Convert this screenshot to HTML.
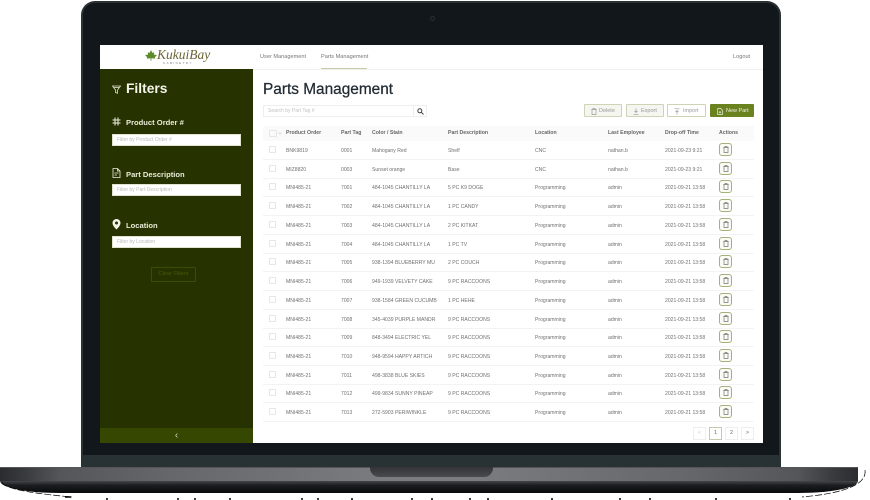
<!DOCTYPE html>
<html><head><meta charset="utf-8">
<style>
html,body{margin:0;padding:0;background:#fff}
body{width:870px;height:500px;position:relative;overflow:hidden;font-family:"Liberation Sans",sans-serif;color:#666}
.a,.a *{box-sizing:border-box}
.a{position:absolute}
#body{left:81px;top:1px;width:700px;height:467px;background:#11171a;border-radius:14px 14px 0 0;border:2px solid #2a3234;border-bottom:0;outline:0}
#chin{left:83px;top:455px;width:696px;height:12px;background:#283133}
#cam{left:430px;top:16px;width:5px;height:5px;border-radius:50%;border:1px solid #2a3033}
#b1{left:0;top:467px;width:858px;height:14px;background:linear-gradient(90deg,#2b2c30 0,#3a3b3f 3%,#55565a 7%,#66676b 20%,#7b7c80 45%,#7b7c80 55%,#66676b 80%,#55565a 93%,#3a3b3f 97%,#2b2c30 100%);border-top:1px solid #555}
#b2{left:0;top:481px;width:858px;height:12px;background:linear-gradient(#45464a,#1c1d20 35%,#08090a);border-radius:0 0 60px 60px/0 0 12px 12px}
#notch{left:370px;top:467px;width:123px;height:10px;background:linear-gradient(#333437,#4a4b4f);border-radius:0 0 9px 9px}
#screen{left:100px;top:45px;width:663px;height:398px;background:#fff;overflow:hidden;filter:blur(.3px)}
#nav{left:0;top:0;width:663px;height:25px;border-bottom:1px solid #f0f0f0}
.nt{position:absolute;font-size:5.6px;color:#777;top:9px;white-space:nowrap}
#ul{left:221px;top:23px;width:46px;height:1px;background:#c5cba8}
#side{left:0;top:24px;width:153px;height:374px;background:#263300}
#tog{left:0;top:359px;width:153px;height:15px;background:#354700;color:#cfd4bb;font-size:10px;text-align:center;line-height:15px}
.lab{position:absolute;left:26px;color:#e8ecd8;font-size:7.6px;font-weight:bold;white-space:nowrap}
.inp{position:absolute;left:12px;width:129px;height:12px;background:#fff;border:1px solid #dfe3cf;color:#bbb;font-size:5px;line-height:10px;padding-left:4px;white-space:nowrap}
#clr{left:51px;top:198px;width:45px;height:15px;border:1px solid #3b4c05;color:#445a08;font-size:5.6px;line-height:13px;text-align:center;border-radius:1px}
#title{left:163px;top:35px;font-size:15.400px;color:#222b33;white-space:nowrap;line-height:19px;-webkit-text-stroke:.25px #222b33}
#srch{left:163px;top:60px;width:151px;height:12px;border:1px solid #eee;color:#c2c2c2;font-size:5px;line-height:10px;padding-left:4px}
#sb{left:313px;top:60px;width:14px;height:12px;border:1px solid #eee}
.btn{position:absolute;top:59px;height:13px;border:1px solid #cdd4b6;background:#f5f6f0;border-radius:1px;color:#999;font-size:5.500px;white-space:nowrap}
.btn span{position:absolute;top:2.500px;line-height:7px}
.btn svg{position:absolute;top:2.500px}
#thead{left:163px;top:81px;width:491px;height:15px;background:#fafafa}
.r{position:absolute;left:163px;width:491px;height:19px;border-bottom:1px solid #f3f3f3}
.r span,#thead span{position:absolute;top:1px;line-height:18px;font-size:5.100px;white-space:nowrap;color:#707070}
#thead span{top:0;line-height:15px;color:#666;font-weight:bold;font-size:5.200px}
.c1{left:23px}.c2{left:78px}.c3{left:109px}.c4{left:185px}.c5{left:272px}.c6{left:345px}.c7{left:402px}.c8{left:456px}
.r i,#thead i{position:absolute;left:6px;top:5px;width:7px;height:7px;border:1px solid #e6e6e6;border-radius:1px;display:block}
#thead i{top:4px;width:8px}
.r b{position:absolute;left:456px;top:2px;width:13px;height:13px;border:1px solid #a3b27a;border-radius:3px;background:#fafbf6}
.r b svg{position:absolute;left:2.500px;top:2px}
.p{position:absolute;top:382px;width:13px;height:13px;border:1px solid #eee;font-size:5.400px;text-align:center;line-height:11px;color:#666}
#dash{left:0;top:465px;width:870px;height:35px}
</style></head><body>
<div class="a" id="body"></div>
<div class="a" id="chin"></div>
<div class="a" id="cam"></div>
<div class="a" id="b1"></div>
<div class="a" id="b2"></div>
<div class="a" id="notch"></div>

<div class="a" id="screen">
 <div class="a" id="nav">
  <svg style="position:absolute;left:45px;top:5px" width="12" height="11" viewBox="0 0 13 12"><path d="M6.500 0L8 3.200 10 2.400 9.700 5 13 5.400 10.600 8 11.200 9.400 7 9 6.800 12H6.200L6 9 1.800 9.400 2.400 8 0 5.400 3.300 5 3 2.400 5 3.200Z" fill="#5d8a2a"/></svg>
  <div style="position:absolute;left:57px;top:3px;font:italic 13.500px 'Liberation Serif',serif;color:#6a6436;white-space:nowrap;line-height:14px">KukuiBay</div>
  <div style="position:absolute;left:63px;top:15.500px;font-size:3px;letter-spacing:1.400px;color:#777;white-space:nowrap;line-height:4px">CABINETRY</div>
  <div class="nt" style="left:160px">User Management</div>
  <div class="nt" style="left:221px">Parts Management</div>
  <div class="nt" style="left:633px">Logout</div>
  <div class="a" id="ul"></div>
 </div>

 <div class="a" id="side">
  <svg style="position:absolute;left:12px;top:16px" width="9" height="9" viewBox="0 0 9 9" fill="none" stroke="#dfe4cf" stroke-width=".8"><path d="M.5 1h8L5.500 5v3.300L3.500 7.500V5Z"/><path d="M2 2.500h5"/></svg>
  <div style="position:absolute;left:26px;top:11px;font-size:13.800px;font-weight:bold;color:#f4f6ea;line-height:17px">Filters</div>

  <svg style="position:absolute;left:12px;top:48px" width="9" height="9" viewBox="0 0 9 9" fill="none" stroke="#eef0e2" stroke-width="1"><path d="M3 0.500V8.500M6 0.500V8.500M.5 3H8.500M.5 6H8.500"/></svg>
  <div class="lab" style="top:49px">Product Order #</div>
  <div class="inp" style="top:65px">Filter by Product Order #</div>

  <svg style="position:absolute;left:12px;top:99px" width="9" height="10" viewBox="0 0 9 10" fill="none" stroke="#eef0e2" stroke-width=".8"><path d="M1 .500H5.500L8 3V9.500H1ZM5.500 .500V3H8M2.500 5H6.500M2.500 7H5"/></svg>
  <div class="lab" style="top:101px">Part Description</div>
  <div class="inp" style="top:115px">Filter by Part Description</div>

  <svg style="position:absolute;left:12px;top:150px" width="9" height="11" viewBox="0 0 9 11"><path fill-rule="evenodd" d="M4.500 0A4 4 0 0 1 8.500 4C8.500 6.500 6 9 4.500 10.500 3 9 .5 6.500.5 4A4 4 0 0 1 4.500 0ZM4.500 2.500A1.500 1.500 0 1 0 4.500 5.500 1.500 1.500 0 1 0 4.500 2.500Z" fill="#f2f4e8"/></svg>
  <div class="lab" style="top:152px">Location</div>
  <div class="inp" style="top:167px">Filter by Location</div>

  <div class="a" id="clr">Clear Filters</div>
  <div class="a" id="tog">‹</div>
 </div>

 <div class="a" id="title">Parts Management</div>
 <div class="a" id="srch">Search by Part Tag #</div>
 <div class="a" id="sb"><svg style="position:absolute;left:3px;top:2px" width="7" height="7" viewBox="0 0 7 7" fill="none" stroke="#444" stroke-width="1"><circle cx="2.800" cy="2.800" r="2"/><path d="M4.300 4.300L6.500 6.500"/></svg></div>

 <div class="btn" style="left:484px;width:38px"><svg style="left:6px" width="6" height="7" viewBox="0 0 6 7" fill="none" stroke="#999" stroke-width=".7"><path d="M1 1.500H5V6.500H1ZM.3 1.500H5.700M2 1.500V.5H4V1.500"/></svg><span style="left:14px">Delete</span></div>
 <div class="btn" style="left:526px;width:38px"><svg style="left:6px" width="6" height="7" viewBox="0 0 6 7" fill="none" stroke="#999" stroke-width=".7"><path d="M3 .5V4.500M1.500 3L3 4.500 4.500 3M.5 6.300H5.500"/></svg><span style="left:14px">Export</span></div>
 <div class="btn" style="left:567px;width:39px;background:#fff"><svg style="left:6px" width="6" height="7" viewBox="0 0 6 7" fill="none" stroke="#999" stroke-width=".7"><path d="M3 6.500V2.500M1.500 4L3 2.500 4.500 4M.5 .8H5.500"/></svg><span style="left:15px">Import</span></div>
 <div class="btn" style="left:610px;width:44px;background:#6b8221;border-color:#6b8221;color:#eef1e0"><svg style="left:6px" width="6" height="7" viewBox="0 0 6 7" fill="none" stroke="#eef1e0" stroke-width=".7"><path d="M.7.500H3.800L5.300 2V6.500H.7ZM3 3V5.500M1.800 4.200H4.200"/></svg><span style="left:15px">New Part</span></div>

 <div class="a" id="thead"><i></i><svg style="position:absolute;left:15px;top:6px" width="4" height="3" viewBox="0 0 4 3" fill="none" stroke="#ccc" stroke-width=".6"><path d="M.5.500L2 2.200 3.500.5"/></svg><span class="c1">Product Order</span><span class="c2">Part Tag</span><span class="c3">Color / Stain</span><span class="c4">Part Description</span><span class="c5">Location</span><span class="c6">Last Employee</span><span class="c7">Drop-off Time</span><span class="c8">Actions</span></div>

 <div class="r" style="top:96px"><i></i><span class="c1">BNK9819</span><span class="c2">0001</span><span class="c3">Mahogany Red</span><span class="c4">Shelf</span><span class="c5">CNC</span><span class="c6">nathan.b</span><span class="c7">2021-09-23 9:21</span><b><svg width="6" height="7" viewBox="0 0 6 7" fill="none" stroke="#777" stroke-width=".7"><path d="M1 1.500H5V6.500H1ZM.3 1.500H5.700M2 1.500V.5H4V1.500"/></svg></b></div>
 <div class="r" style="top:115px"><i></i><span class="c1">MIZ8820</span><span class="c2">0003</span><span class="c3">Sunset orange</span><span class="c4">Base</span><span class="c5">CNC</span><span class="c6">nathan.b</span><span class="c7">2021-09-23 9:21</span><b><svg width="6" height="7" viewBox="0 0 6 7" fill="none" stroke="#777" stroke-width=".7"><path d="M1 1.500H5V6.500H1ZM.3 1.500H5.700M2 1.500V.5H4V1.500"/></svg></b></div>
 <div class="r" style="top:133px"><i></i><span class="c1">MNI485-21</span><span class="c2">7001</span><span class="c3">484-1045 CHANTILLY LA</span><span class="c4">5 PC K9 DOGE</span><span class="c5">Programming</span><span class="c6">admin</span><span class="c7">2021-09-21 13:58</span><b><svg width="6" height="7" viewBox="0 0 6 7" fill="none" stroke="#777" stroke-width=".7"><path d="M1 1.500H5V6.500H1ZM.3 1.500H5.700M2 1.500V.5H4V1.500"/></svg></b></div>
 <div class="r" style="top:152px"><i></i><span class="c1">MNI485-21</span><span class="c2">7002</span><span class="c3">484-1045 CHANTILLY LA</span><span class="c4">1 PC CANDY</span><span class="c5">Programming</span><span class="c6">admin</span><span class="c7">2021-09-21 13:58</span><b><svg width="6" height="7" viewBox="0 0 6 7" fill="none" stroke="#777" stroke-width=".7"><path d="M1 1.500H5V6.500H1ZM.3 1.500H5.700M2 1.500V.5H4V1.500"/></svg></b></div>
 <div class="r" style="top:171px"><i></i><span class="c1">MNI485-21</span><span class="c2">7003</span><span class="c3">484-1045 CHANTILLY LA</span><span class="c4">2 PC KITKAT</span><span class="c5">Programming</span><span class="c6">admin</span><span class="c7">2021-09-21 13:58</span><b><svg width="6" height="7" viewBox="0 0 6 7" fill="none" stroke="#777" stroke-width=".7"><path d="M1 1.500H5V6.500H1ZM.3 1.500H5.700M2 1.500V.5H4V1.500"/></svg></b></div>
 <div class="r" style="top:190px"><i></i><span class="c1">MNI485-21</span><span class="c2">7004</span><span class="c3">484-1045 CHANTILLY LA</span><span class="c4">1 PC TV</span><span class="c5">Programming</span><span class="c6">admin</span><span class="c7">2021-09-21 13:58</span><b><svg width="6" height="7" viewBox="0 0 6 7" fill="none" stroke="#777" stroke-width=".7"><path d="M1 1.500H5V6.500H1ZM.3 1.500H5.700M2 1.500V.5H4V1.500"/></svg></b></div>
 <div class="r" style="top:208px"><i></i><span class="c1">MNI485-21</span><span class="c2">7005</span><span class="c3">938-1394 BLUEBERRY MU</span><span class="c4">2 PC COUCH</span><span class="c5">Programming</span><span class="c6">admin</span><span class="c7">2021-09-21 13:58</span><b><svg width="6" height="7" viewBox="0 0 6 7" fill="none" stroke="#777" stroke-width=".7"><path d="M1 1.500H5V6.500H1ZM.3 1.500H5.700M2 1.500V.5H4V1.500"/></svg></b></div>
 <div class="r" style="top:227px"><i></i><span class="c1">MNI485-21</span><span class="c2">7006</span><span class="c3">949-1939 VELVETY CAKE</span><span class="c4">9 PC RACCOONS</span><span class="c5">Programming</span><span class="c6">admin</span><span class="c7">2021-09-21 13:58</span><b><svg width="6" height="7" viewBox="0 0 6 7" fill="none" stroke="#777" stroke-width=".7"><path d="M1 1.500H5V6.500H1ZM.3 1.500H5.700M2 1.500V.5H4V1.500"/></svg></b></div>
 <div class="r" style="top:246px"><i></i><span class="c1">MNI485-21</span><span class="c2">7007</span><span class="c3">938-1584 GREEN CUCUMB</span><span class="c4">1 PC HEHE</span><span class="c5">Programming</span><span class="c6">admin</span><span class="c7">2021-09-21 13:58</span><b><svg width="6" height="7" viewBox="0 0 6 7" fill="none" stroke="#777" stroke-width=".7"><path d="M1 1.500H5V6.500H1ZM.3 1.500H5.700M2 1.500V.5H4V1.500"/></svg></b></div>
 <div class="r" style="top:265px"><i></i><span class="c1">MNI485-21</span><span class="c2">7008</span><span class="c3">345-4039 PURPLE MANDR</span><span class="c4">9 PC RACCOONS</span><span class="c5">Programming</span><span class="c6">admin</span><span class="c7">2021-09-21 13:58</span><b><svg width="6" height="7" viewBox="0 0 6 7" fill="none" stroke="#777" stroke-width=".7"><path d="M1 1.500H5V6.500H1ZM.3 1.500H5.700M2 1.500V.5H4V1.500"/></svg></b></div>
 <div class="r" style="top:283px"><i></i><span class="c1">MNI485-21</span><span class="c2">7009</span><span class="c3">848-3494 ELECTRIC YEL</span><span class="c4">9 PC RACCOONS</span><span class="c5">Programming</span><span class="c6">admin</span><span class="c7">2021-09-21 13:58</span><b><svg width="6" height="7" viewBox="0 0 6 7" fill="none" stroke="#777" stroke-width=".7"><path d="M1 1.500H5V6.500H1ZM.3 1.500H5.700M2 1.500V.5H4V1.500"/></svg></b></div>
 <div class="r" style="top:302px"><i></i><span class="c1">MNI485-21</span><span class="c2">7010</span><span class="c3">948-9594 HAPPY ARTICH</span><span class="c4">9 PC RACCOONS</span><span class="c5">Programming</span><span class="c6">admin</span><span class="c7">2021-09-21 13:58</span><b><svg width="6" height="7" viewBox="0 0 6 7" fill="none" stroke="#777" stroke-width=".7"><path d="M1 1.500H5V6.500H1ZM.3 1.500H5.700M2 1.500V.5H4V1.500"/></svg></b></div>
 <div class="r" style="top:321px"><i></i><span class="c1">MNI485-21</span><span class="c2">7011</span><span class="c3">498-3838 BLUE SKIES</span><span class="c4">9 PC RACCOONS</span><span class="c5">Programming</span><span class="c6">admin</span><span class="c7">2021-09-21 13:58</span><b><svg width="6" height="7" viewBox="0 0 6 7" fill="none" stroke="#777" stroke-width=".7"><path d="M1 1.500H5V6.500H1ZM.3 1.500H5.700M2 1.500V.5H4V1.500"/></svg></b></div>
 <div class="r" style="top:339px"><i></i><span class="c1">MNI485-21</span><span class="c2">7012</span><span class="c3">499-9834 SUNNY PINEAP</span><span class="c4">9 PC RACCOONS</span><span class="c5">Programming</span><span class="c6">admin</span><span class="c7">2021-09-21 13:58</span><b><svg width="6" height="7" viewBox="0 0 6 7" fill="none" stroke="#777" stroke-width=".7"><path d="M1 1.500H5V6.500H1ZM.3 1.500H5.700M2 1.500V.5H4V1.500"/></svg></b></div>
 <div class="r" style="top:358px"><i></i><span class="c1">MNI485-21</span><span class="c2">7013</span><span class="c3">272-5903 PERIWINKLE</span><span class="c4">9 PC RACCOONS</span><span class="c5">Programming</span><span class="c6">admin</span><span class="c7">2021-09-21 13:58</span><b><svg width="6" height="7" viewBox="0 0 6 7" fill="none" stroke="#777" stroke-width=".7"><path d="M1 1.500H5V6.500H1ZM.3 1.500H5.700M2 1.500V.5H4V1.500"/></svg></b></div>

 <div class="p" style="left:593px;color:#ccc">&lt;</div>
 <div class="p" style="left:609px;border-color:#c5cba8">1</div>
 <div class="p" style="left:625px">2</div>
 <div class="p" style="left:641px">&gt;</div>
</div>

<svg class="a" id="dash" width="870" height="35" viewBox="0 465 870 35" fill="none" stroke="#000"><path d="M65 497H71M107 498V500M178 498V500M195 498V500M230 498V500M302 498V500M318 498V500M352 498V500M412 498V500M432 498V500M470 498V500M488 498V500M552 498V500M620 498V500M650 498V500M716 498V500M790 498V500" stroke-width="1.500"/><path d="M2 482Q4 491 72 497" stroke-width=".7" stroke-dasharray="7 2"/><path d="M865 470Q868 491 802 497" stroke-width=".7" stroke-dasharray="7 2"/></svg>
</body></html>
